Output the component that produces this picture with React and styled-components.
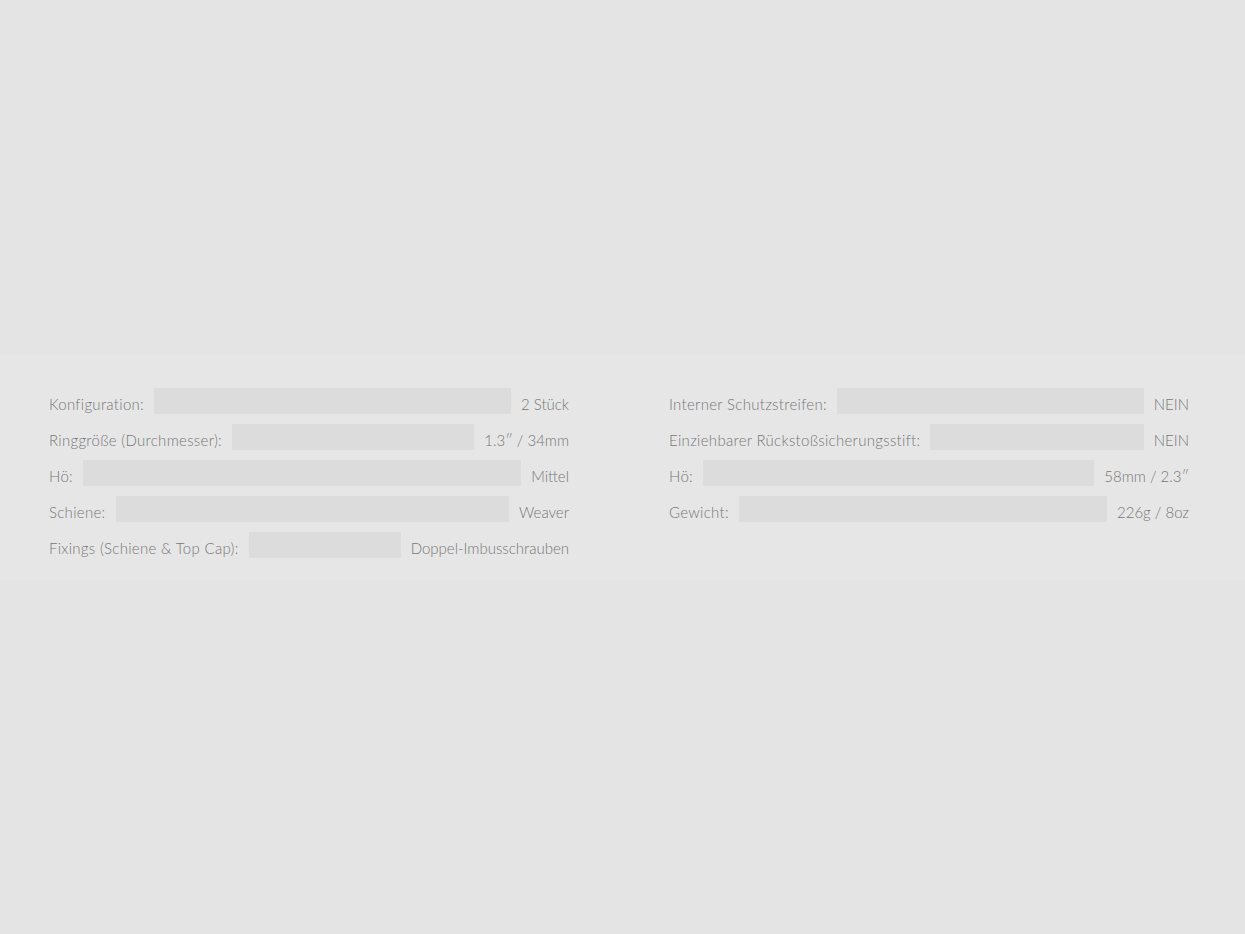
import { createGlobalStyle, styled } from 'styled-components';

const GlobalStyle = createGlobalStyle`
  html, body {
    margin: 0;
    padding: 0;
    background: #e4e4e4;
  }
  body {
    font-family: Lato, "Open Sans", sans-serif;
  }
`;

const Page = styled.div`
  min-height: 934px;
  display: flex;
  flex-direction: column;
  padding-top: 355px;
  box-sizing: border-box;
`;

const SpecBand = styled.section`
  background: #e6e6e6;
  padding: 28px 56px 17px 49px;
  display: grid;
  grid-template-columns: 1fr 1fr;
  column-gap: 100px;
  align-items: start;
`;

const SpecList = styled.div`
  display: flex;
  flex-direction: column;
`;

const SpecRow = styled.div`
  display: flex;
  align-items: center;
  gap: 10px;
  height: 36px;
  font-size: 15px;
  font-weight: 300;
  color: #777;
  white-space: nowrap;
`;

const Label = styled.span`
  padding-top: 6px;
  letter-spacing: 0.3px;
`;

const Value = styled.span`
  padding-top: 6px;
  letter-spacing: 0;
`;

const Filler = styled.div`
  flex: 1;
  height: 26px;
  background: #dcdcdc;
`;

const left = [
  ['Konfiguration:', '2 Stück'],
  ['Ringgröße (Durchmesser):', '1.3″ / 34mm'],
  ['Hö:', 'Mittel'],
  ['Schiene:', 'Weaver'],
  ['Fixings (Schiene & Top Cap):', 'Doppel-Imbusschrauben'],
];

const right = [
  ['Interner Schutzstreifen:', 'NEIN'],
  ['Einziehbarer Rückstoßsicherungsstift:', 'NEIN'],
  ['Hö:', '58mm / 2.3″'],
  ['Gewicht:', '226g / 8oz'],
];

function Specs({ items }) {
  return (
    <SpecList>
      {items.map(([label, value]) => (
        <SpecRow key={label}>
          <Label>{label}</Label>
          <Filler />
          <Value>{value}</Value>
        </SpecRow>
      ))}
    </SpecList>
  );
}

export default function App() {
  return (
    <>
      <GlobalStyle />
      <Page>
        <SpecBand>
          <Specs items={left} />
          <Specs items={right} />
        </SpecBand>
      </Page>
    </>
  );
}
